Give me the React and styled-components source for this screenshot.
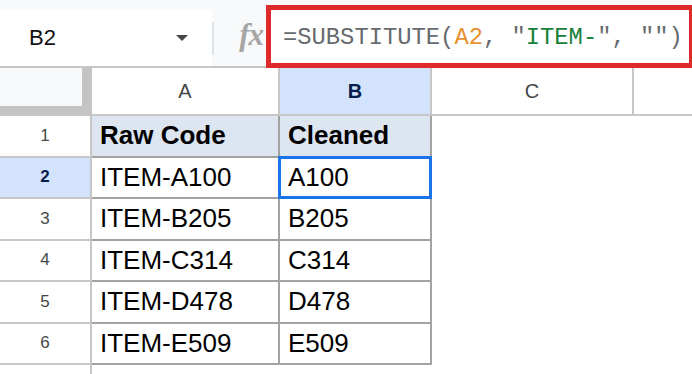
import React from "react";
import styled, { createGlobalStyle } from "styled-components";

const GlobalStyle = createGlobalStyle`
  html, body {
    margin: 0;
    padding: 0;
    background: #ffffff;
    overflow: hidden;
  }
  body {
    font-family: "Liberation Sans", Arial, sans-serif;
  }
`;

const rows = [
  { n: 1, raw: "Raw Code", clean: "Cleaned", header: true },
  { n: 2, raw: "ITEM-A100", clean: "A100", active: true },
  { n: 3, raw: "ITEM-B205", clean: "B205" },
  { n: 4, raw: "ITEM-C314", clean: "C314" },
  { n: 5, raw: "ITEM-D478", clean: "D478" },
  { n: 6, raw: "ITEM-E509", clean: "E509" },
];

export default function App() {
  return (
    <>
      <GlobalStyle />
      <Page>
        <TopBar>
          <NameBox>
            <CellRef>B2</CellRef>
            <Caret />
          </NameBox>
          <Divider />
          <FxSlot>
            <Fx>fx</Fx>
          </FxSlot>
          <FormulaInput>
            <Tok>=SUBSTITUTE(</Tok>
            <Tok $c="#e8912d">A2</Tok>
            <Tok>, "</Tok>
            <Tok $c="#188038">ITEM-</Tok>
            <Tok>", "")</Tok>
          </FormulaInput>
          <Highlight />
        </TopBar>

        <Grid>
          <Corner>
            <CornerFill />
          </Corner>
          <ColHead>A</ColHead>
          <ColHead $selected>B</ColHead>
          <ColHead>C</ColHead>
          <ColHead $last />

          {rows.map((r) => (
            <React.Fragment key={r.n}>
              <RowHead $selected={r.active}>{r.n}</RowHead>
              <DataCell $header={r.header}>{r.raw}</DataCell>
              <DataCell $header={r.header} $active={r.active}>
                {r.clean}
              </DataCell>
              <EmptyCell />
              <EmptyCell />
            </React.Fragment>
          ))}

          {/* next row peeks in below the fold, its number is off-screen */}
          <RowHead />
          <EmptyCell />
          <EmptyCell />
          <EmptyCell />
          <EmptyCell />
        </Grid>
      </Page>
    </>
  );
}

const Page = styled.div`
  width: 692px;
  height: 374px;
  overflow: hidden;
  background: #fff;
`;

const TopBar = styled.div`
  position: relative;
  display: flex;
  height: 68px;
  box-sizing: border-box;
  background: #f8f9fa;
  border-bottom: 2px solid #c7c7c7;
`;

const NameBox = styled.div`
  display: flex;
  align-items: center;
  width: 212px;
  margin-top: 10px;
  padding-left: 29px;
  padding-right: 24px;
  box-sizing: border-box;
  background: #fff;
`;

const CellRef = styled.span`
  font-size: 22px;
  color: #111;
`;

const Caret = styled.span`
  margin-left: auto;
  width: 0;
  height: 0;
  border-left: 6px solid transparent;
  border-right: 6px solid transparent;
  border-top: 6px solid #444746;
`;

const Divider = styled.div`
  width: 2px;
  height: 33px;
  margin-top: 22px;
  background: #dde3ea;
`;

const FxSlot = styled.div`
  display: flex;
  align-items: center;
  justify-content: flex-end;
  width: 52px;
  padding-right: 3px;
  padding-top: 4px;
  box-sizing: border-box;
`;

const Fx = styled.span`
  font-family: "Liberation Serif", "Times New Roman", serif;
  font-style: italic;
  font-weight: bold;
  font-size: 31px;
  color: #a6a6a6;
  letter-spacing: -1px;
`;

const FormulaInput = styled.div`
  flex: 1;
  display: flex;
  align-items: center;
  margin-top: 10px;
  padding-left: 17px;
  padding-bottom: 2px;
  background: #fff;
  white-space: pre;
  font-family: "Liberation Mono", "DejaVu Sans Mono", monospace;
  font-size: 23.8px;
`;

const Tok = styled.span`
  color: ${(p) => p.$c || "#666a6e"};
`;

const Highlight = styled.div`
  position: absolute;
  left: 266px;
  top: 5px;
  width: 428px;
  height: 63px;
  box-sizing: border-box;
  border: 5px solid #de2a2a;
  pointer-events: none;
`;

const Grid = styled.div`
  display: grid;
  grid-template-columns: 92px 188px 152px 202px 1fr;
  grid-template-rows: 48px repeat(7, 41.5px);
`;

const Corner = styled.div`
  display: flex;
  background: #c4c4c4;
`;

const CornerFill = styled.div`
  flex: 1;
  margin: 0 10px 10px 0;
  background: #f8f9fa;
`;

const ColHead = styled.div`
  display: flex;
  align-items: center;
  justify-content: center;
  box-sizing: border-box;
  border-right: ${(p) => (p.$last ? "none" : "2px solid #c7c7c7")};
  border-bottom: 2px solid #c7c7c7;
  background: ${(p) => (p.$selected ? "#d3e3fd" : "#fff")};
  color: ${(p) => (p.$selected ? "#041e49" : "#444746")};
  font-weight: ${(p) => (p.$selected ? "bold" : "normal")};
  font-size: 20px;
`;

const RowHead = styled.div`
  display: flex;
  align-items: center;
  justify-content: center;
  box-sizing: border-box;
  border-right: 2px solid #c7c7c7;
  border-bottom: 2px solid #c7c7c7;
  background: ${(p) => (p.$selected ? "#d3e3fd" : "#fff")};
  color: ${(p) => (p.$selected ? "#041e49" : "#444746")};
  font-weight: ${(p) => (p.$selected ? "bold" : "normal")};
  font-size: 17px;
`;

const DataCell = styled.div`
  position: relative;
  display: flex;
  align-items: center;
  box-sizing: border-box;
  padding-left: 8px;
  border-right: 2px solid #a3a3a3;
  border-bottom: 2px solid #a3a3a3;
  background: ${(p) => (p.$header ? "#dce5f0" : "#fff")};
  font-weight: ${(p) => (p.$header ? "bold" : "normal")};
  font-size: 26px;
  color: #000;

  ${(p) =>
    p.$active &&
    `
    &::after {
      content: "";
      position: absolute;
      inset: -2px;
      border: 3px solid #1a73e8;
    }
  `}
`;

const EmptyCell = styled.div`
  background: #fff;
`;
